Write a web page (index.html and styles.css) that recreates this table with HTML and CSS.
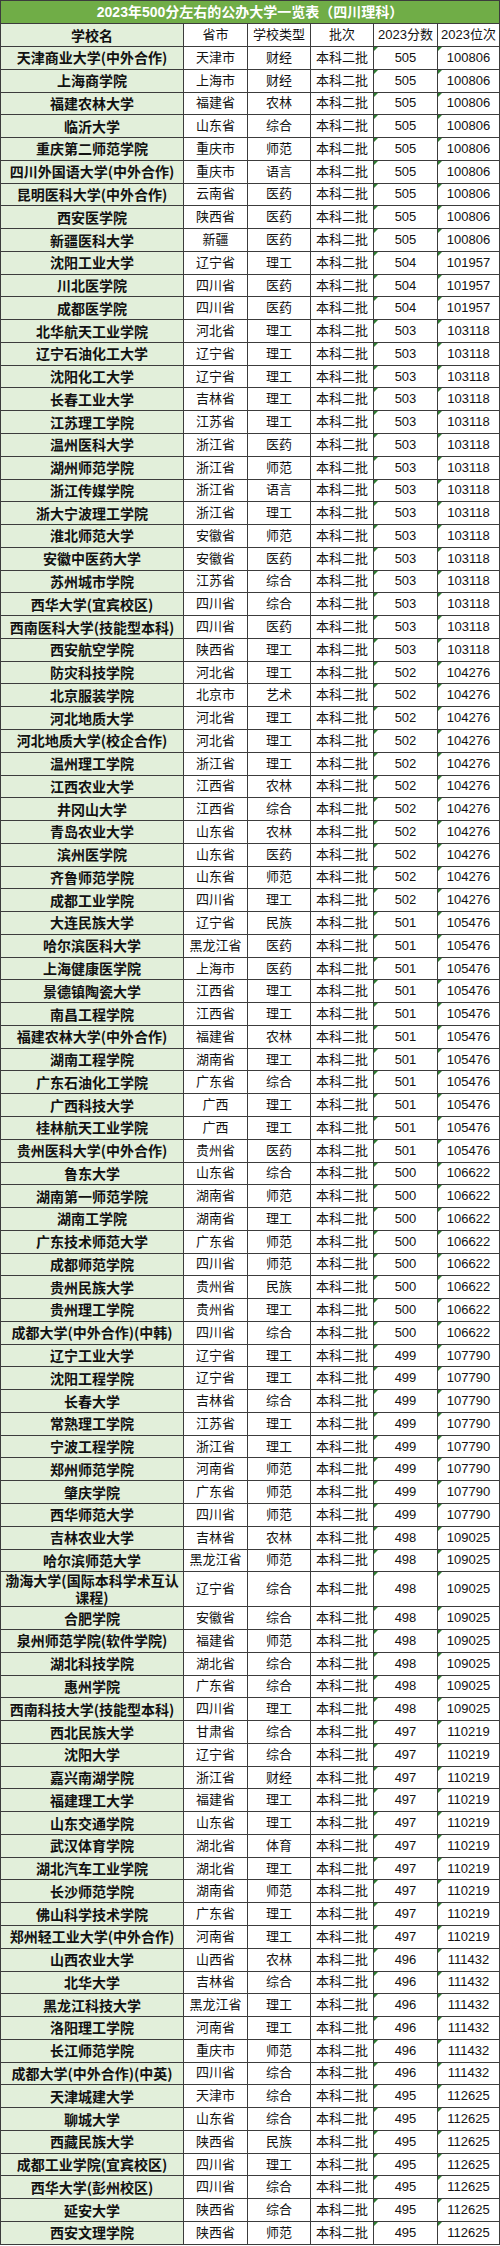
FILE: index.html
```html
<!DOCTYPE html>
<html lang="zh-CN">
<head>
<meta charset="utf-8">
<title>2023年500分左右的公办大学一览表（四川理科）</title>
<link rel="stylesheet" href="styles.css">
</head>
<body>
<table class="sheet">
<colgroup>
<col class="c-name"><col class="c-prov"><col class="c-type"><col class="c-batch"><col class="c-score"><col class="c-rank">
</colgroup>
<thead>
<tr class="title-row"><th colspan="6" class="title">2023年500分左右的公办大学一览表（四川理科）</th></tr>
<tr class="head-row"><th class="name">学校名</th><th>省市</th><th>学校类型</th><th>批次</th><th>2023分数</th><th>2023位次</th></tr>
</thead>
<tbody>
<tr><td class="name">天津商业大学(中外合作)</td><td>天津市</td><td>财经</td><td>本科二批</td><td class="num">505</td><td class="num">100806</td></tr>
<tr><td class="name">上海商学院</td><td>上海市</td><td>财经</td><td>本科二批</td><td class="num">505</td><td class="num">100806</td></tr>
<tr><td class="name">福建农林大学</td><td>福建省</td><td>农林</td><td>本科二批</td><td class="num">505</td><td class="num">100806</td></tr>
<tr><td class="name">临沂大学</td><td>山东省</td><td>综合</td><td>本科二批</td><td class="num">505</td><td class="num">100806</td></tr>
<tr><td class="name">重庆第二师范学院</td><td>重庆市</td><td>师范</td><td>本科二批</td><td class="num">505</td><td class="num">100806</td></tr>
<tr><td class="name">四川外国语大学(中外合作)</td><td>重庆市</td><td>语言</td><td>本科二批</td><td class="num">505</td><td class="num">100806</td></tr>
<tr><td class="name">昆明医科大学(中外合作)</td><td>云南省</td><td>医药</td><td>本科二批</td><td class="num">505</td><td class="num">100806</td></tr>
<tr><td class="name">西安医学院</td><td>陕西省</td><td>医药</td><td>本科二批</td><td class="num">505</td><td class="num">100806</td></tr>
<tr><td class="name">新疆医科大学</td><td>新疆</td><td>医药</td><td>本科二批</td><td class="num">505</td><td class="num">100806</td></tr>
<tr><td class="name">沈阳工业大学</td><td>辽宁省</td><td>理工</td><td>本科二批</td><td class="num">504</td><td class="num">101957</td></tr>
<tr><td class="name">川北医学院</td><td>四川省</td><td>医药</td><td>本科二批</td><td class="num">504</td><td class="num">101957</td></tr>
<tr><td class="name">成都医学院</td><td>四川省</td><td>医药</td><td>本科二批</td><td class="num">504</td><td class="num">101957</td></tr>
<tr><td class="name">北华航天工业学院</td><td>河北省</td><td>理工</td><td>本科二批</td><td class="num">503</td><td class="num">103118</td></tr>
<tr><td class="name">辽宁石油化工大学</td><td>辽宁省</td><td>理工</td><td>本科二批</td><td class="num">503</td><td class="num">103118</td></tr>
<tr><td class="name">沈阳化工大学</td><td>辽宁省</td><td>理工</td><td>本科二批</td><td class="num">503</td><td class="num">103118</td></tr>
<tr><td class="name">长春工业大学</td><td>吉林省</td><td>理工</td><td>本科二批</td><td class="num">503</td><td class="num">103118</td></tr>
<tr><td class="name">江苏理工学院</td><td>江苏省</td><td>理工</td><td>本科二批</td><td class="num">503</td><td class="num">103118</td></tr>
<tr><td class="name">温州医科大学</td><td>浙江省</td><td>医药</td><td>本科二批</td><td class="num">503</td><td class="num">103118</td></tr>
<tr><td class="name">湖州师范学院</td><td>浙江省</td><td>师范</td><td>本科二批</td><td class="num">503</td><td class="num">103118</td></tr>
<tr><td class="name">浙江传媒学院</td><td>浙江省</td><td>语言</td><td>本科二批</td><td class="num">503</td><td class="num">103118</td></tr>
<tr><td class="name">浙大宁波理工学院</td><td>浙江省</td><td>理工</td><td>本科二批</td><td class="num">503</td><td class="num">103118</td></tr>
<tr><td class="name">淮北师范大学</td><td>安徽省</td><td>师范</td><td>本科二批</td><td class="num">503</td><td class="num">103118</td></tr>
<tr><td class="name">安徽中医药大学</td><td>安徽省</td><td>医药</td><td>本科二批</td><td class="num">503</td><td class="num">103118</td></tr>
<tr><td class="name">苏州城市学院</td><td>江苏省</td><td>综合</td><td>本科二批</td><td class="num">503</td><td class="num">103118</td></tr>
<tr><td class="name">西华大学(宜宾校区)</td><td>四川省</td><td>综合</td><td>本科二批</td><td class="num">503</td><td class="num">103118</td></tr>
<tr><td class="name">西南医科大学(技能型本科)</td><td>四川省</td><td>医药</td><td>本科二批</td><td class="num">503</td><td class="num">103118</td></tr>
<tr><td class="name">西安航空学院</td><td>陕西省</td><td>理工</td><td>本科二批</td><td class="num">503</td><td class="num">103118</td></tr>
<tr><td class="name">防灾科技学院</td><td>河北省</td><td>理工</td><td>本科二批</td><td class="num">502</td><td class="num">104276</td></tr>
<tr><td class="name">北京服装学院</td><td>北京市</td><td>艺术</td><td>本科二批</td><td class="num">502</td><td class="num">104276</td></tr>
<tr><td class="name">河北地质大学</td><td>河北省</td><td>理工</td><td>本科二批</td><td class="num">502</td><td class="num">104276</td></tr>
<tr><td class="name">河北地质大学(校企合作)</td><td>河北省</td><td>理工</td><td>本科二批</td><td class="num">502</td><td class="num">104276</td></tr>
<tr><td class="name">温州理工学院</td><td>浙江省</td><td>理工</td><td>本科二批</td><td class="num">502</td><td class="num">104276</td></tr>
<tr><td class="name">江西农业大学</td><td>江西省</td><td>农林</td><td>本科二批</td><td class="num">502</td><td class="num">104276</td></tr>
<tr><td class="name">井冈山大学</td><td>江西省</td><td>综合</td><td>本科二批</td><td class="num">502</td><td class="num">104276</td></tr>
<tr><td class="name">青岛农业大学</td><td>山东省</td><td>农林</td><td>本科二批</td><td class="num">502</td><td class="num">104276</td></tr>
<tr><td class="name">滨州医学院</td><td>山东省</td><td>医药</td><td>本科二批</td><td class="num">502</td><td class="num">104276</td></tr>
<tr><td class="name">齐鲁师范学院</td><td>山东省</td><td>师范</td><td>本科二批</td><td class="num">502</td><td class="num">104276</td></tr>
<tr><td class="name">成都工业学院</td><td>四川省</td><td>理工</td><td>本科二批</td><td class="num">502</td><td class="num">104276</td></tr>
<tr><td class="name">大连民族大学</td><td>辽宁省</td><td>民族</td><td>本科二批</td><td class="num">501</td><td class="num">105476</td></tr>
<tr><td class="name">哈尔滨医科大学</td><td>黑龙江省</td><td>医药</td><td>本科二批</td><td class="num">501</td><td class="num">105476</td></tr>
<tr><td class="name">上海健康医学院</td><td>上海市</td><td>医药</td><td>本科二批</td><td class="num">501</td><td class="num">105476</td></tr>
<tr><td class="name">景德镇陶瓷大学</td><td>江西省</td><td>理工</td><td>本科二批</td><td class="num">501</td><td class="num">105476</td></tr>
<tr><td class="name">南昌工程学院</td><td>江西省</td><td>理工</td><td>本科二批</td><td class="num">501</td><td class="num">105476</td></tr>
<tr><td class="name">福建农林大学(中外合作)</td><td>福建省</td><td>农林</td><td>本科二批</td><td class="num">501</td><td class="num">105476</td></tr>
<tr><td class="name">湖南工程学院</td><td>湖南省</td><td>理工</td><td>本科二批</td><td class="num">501</td><td class="num">105476</td></tr>
<tr><td class="name">广东石油化工学院</td><td>广东省</td><td>综合</td><td>本科二批</td><td class="num">501</td><td class="num">105476</td></tr>
<tr><td class="name">广西科技大学</td><td>广西</td><td>理工</td><td>本科二批</td><td class="num">501</td><td class="num">105476</td></tr>
<tr><td class="name">桂林航天工业学院</td><td>广西</td><td>理工</td><td>本科二批</td><td class="num">501</td><td class="num">105476</td></tr>
<tr><td class="name">贵州医科大学(中外合作)</td><td>贵州省</td><td>医药</td><td>本科二批</td><td class="num">501</td><td class="num">105476</td></tr>
<tr><td class="name">鲁东大学</td><td>山东省</td><td>综合</td><td>本科二批</td><td class="num">500</td><td class="num">106622</td></tr>
<tr><td class="name">湖南第一师范学院</td><td>湖南省</td><td>师范</td><td>本科二批</td><td class="num">500</td><td class="num">106622</td></tr>
<tr><td class="name">湖南工学院</td><td>湖南省</td><td>理工</td><td>本科二批</td><td class="num">500</td><td class="num">106622</td></tr>
<tr><td class="name">广东技术师范大学</td><td>广东省</td><td>师范</td><td>本科二批</td><td class="num">500</td><td class="num">106622</td></tr>
<tr><td class="name">成都师范学院</td><td>四川省</td><td>师范</td><td>本科二批</td><td class="num">500</td><td class="num">106622</td></tr>
<tr><td class="name">贵州民族大学</td><td>贵州省</td><td>民族</td><td>本科二批</td><td class="num">500</td><td class="num">106622</td></tr>
<tr><td class="name">贵州理工学院</td><td>贵州省</td><td>理工</td><td>本科二批</td><td class="num">500</td><td class="num">106622</td></tr>
<tr><td class="name">成都大学(中外合作)(中韩)</td><td>四川省</td><td>综合</td><td>本科二批</td><td class="num">500</td><td class="num">106622</td></tr>
<tr><td class="name">辽宁工业大学</td><td>辽宁省</td><td>理工</td><td>本科二批</td><td class="num">499</td><td class="num">107790</td></tr>
<tr><td class="name">沈阳工程学院</td><td>辽宁省</td><td>理工</td><td>本科二批</td><td class="num">499</td><td class="num">107790</td></tr>
<tr><td class="name">长春大学</td><td>吉林省</td><td>综合</td><td>本科二批</td><td class="num">499</td><td class="num">107790</td></tr>
<tr><td class="name">常熟理工学院</td><td>江苏省</td><td>理工</td><td>本科二批</td><td class="num">499</td><td class="num">107790</td></tr>
<tr><td class="name">宁波工程学院</td><td>浙江省</td><td>理工</td><td>本科二批</td><td class="num">499</td><td class="num">107790</td></tr>
<tr><td class="name">郑州师范学院</td><td>河南省</td><td>师范</td><td>本科二批</td><td class="num">499</td><td class="num">107790</td></tr>
<tr><td class="name">肇庆学院</td><td>广东省</td><td>师范</td><td>本科二批</td><td class="num">499</td><td class="num">107790</td></tr>
<tr><td class="name">西华师范大学</td><td>四川省</td><td>师范</td><td>本科二批</td><td class="num">499</td><td class="num">107790</td></tr>
<tr><td class="name">吉林农业大学</td><td>吉林省</td><td>农林</td><td>本科二批</td><td class="num">498</td><td class="num">109025</td></tr>
<tr><td class="name">哈尔滨师范大学</td><td>黑龙江省</td><td>师范</td><td>本科二批</td><td class="num">498</td><td class="num">109025</td></tr>
<tr class="tall"><td class="name">渤海大学(国际本科学术互认课程)</td><td>辽宁省</td><td>综合</td><td>本科二批</td><td class="num">498</td><td class="num">109025</td></tr>
<tr><td class="name">合肥学院</td><td>安徽省</td><td>综合</td><td>本科二批</td><td class="num">498</td><td class="num">109025</td></tr>
<tr><td class="name">泉州师范学院(软件学院)</td><td>福建省</td><td>师范</td><td>本科二批</td><td class="num">498</td><td class="num">109025</td></tr>
<tr><td class="name">湖北科技学院</td><td>湖北省</td><td>综合</td><td>本科二批</td><td class="num">498</td><td class="num">109025</td></tr>
<tr><td class="name">惠州学院</td><td>广东省</td><td>综合</td><td>本科二批</td><td class="num">498</td><td class="num">109025</td></tr>
<tr><td class="name">西南科技大学(技能型本科)</td><td>四川省</td><td>理工</td><td>本科二批</td><td class="num">498</td><td class="num">109025</td></tr>
<tr><td class="name">西北民族大学</td><td>甘肃省</td><td>综合</td><td>本科二批</td><td class="num">497</td><td class="num">110219</td></tr>
<tr><td class="name">沈阳大学</td><td>辽宁省</td><td>综合</td><td>本科二批</td><td class="num">497</td><td class="num">110219</td></tr>
<tr><td class="name">嘉兴南湖学院</td><td>浙江省</td><td>财经</td><td>本科二批</td><td class="num">497</td><td class="num">110219</td></tr>
<tr><td class="name">福建理工大学</td><td>福建省</td><td>理工</td><td>本科二批</td><td class="num">497</td><td class="num">110219</td></tr>
<tr><td class="name">山东交通学院</td><td>山东省</td><td>理工</td><td>本科二批</td><td class="num">497</td><td class="num">110219</td></tr>
<tr><td class="name">武汉体育学院</td><td>湖北省</td><td>体育</td><td>本科二批</td><td class="num">497</td><td class="num">110219</td></tr>
<tr><td class="name">湖北汽车工业学院</td><td>湖北省</td><td>理工</td><td>本科二批</td><td class="num">497</td><td class="num">110219</td></tr>
<tr><td class="name">长沙师范学院</td><td>湖南省</td><td>师范</td><td>本科二批</td><td class="num">497</td><td class="num">110219</td></tr>
<tr><td class="name">佛山科学技术学院</td><td>广东省</td><td>理工</td><td>本科二批</td><td class="num">497</td><td class="num">110219</td></tr>
<tr><td class="name">郑州轻工业大学(中外合作)</td><td>河南省</td><td>理工</td><td>本科二批</td><td class="num">497</td><td class="num">110219</td></tr>
<tr><td class="name">山西农业大学</td><td>山西省</td><td>农林</td><td>本科二批</td><td class="num">496</td><td class="num">111432</td></tr>
<tr><td class="name">北华大学</td><td>吉林省</td><td>综合</td><td>本科二批</td><td class="num">496</td><td class="num">111432</td></tr>
<tr><td class="name">黑龙江科技大学</td><td>黑龙江省</td><td>理工</td><td>本科二批</td><td class="num">496</td><td class="num">111432</td></tr>
<tr><td class="name">洛阳理工学院</td><td>河南省</td><td>理工</td><td>本科二批</td><td class="num">496</td><td class="num">111432</td></tr>
<tr><td class="name">长江师范学院</td><td>重庆市</td><td>师范</td><td>本科二批</td><td class="num">496</td><td class="num">111432</td></tr>
<tr><td class="name">成都大学(中外合作)(中英)</td><td>四川省</td><td>综合</td><td>本科二批</td><td class="num">496</td><td class="num">111432</td></tr>
<tr><td class="name">天津城建大学</td><td>天津市</td><td>综合</td><td>本科二批</td><td class="num">495</td><td class="num">112625</td></tr>
<tr><td class="name">聊城大学</td><td>山东省</td><td>综合</td><td>本科二批</td><td class="num">495</td><td class="num">112625</td></tr>
<tr><td class="name">西藏民族大学</td><td>陕西省</td><td>民族</td><td>本科二批</td><td class="num">495</td><td class="num">112625</td></tr>
<tr><td class="name">成都工业学院(宜宾校区)</td><td>四川省</td><td>理工</td><td>本科二批</td><td class="num">495</td><td class="num">112625</td></tr>
<tr><td class="name">西华大学(彭州校区)</td><td>四川省</td><td>综合</td><td>本科二批</td><td class="num">495</td><td class="num">112625</td></tr>
<tr><td class="name">延安大学</td><td>陕西省</td><td>综合</td><td>本科二批</td><td class="num">495</td><td class="num">112625</td></tr>
<tr><td class="name">西安文理学院</td><td>陕西省</td><td>师范</td><td>本科二批</td><td class="num">495</td><td class="num">112625</td></tr>
</tbody>
</table>
</body>
</html>
```
FILE: styles.css
```css
html, body {
  margin: 0;
  padding: 0;
  background: #ffffff;
}

.sheet {
  width: 499px;
  border-collapse: collapse;
  table-layout: fixed;
  font-family: "Liberation Sans", "Noto Sans CJK SC", sans-serif;
  font-size: 13px;
  color: #111111;
}

.c-name { width: 183px; }
.c-prov { width: 64px; }
.c-type { width: 63px; }
.c-batch { width: 63px; }
.c-score { width: 64px; }
.c-rank { width: 62px; }

.sheet th,
.sheet td {
  border: 1px solid #3c3c3c;
  padding: 0 2px;
  text-align: center;
  vertical-align: middle;
  font-weight: 400;
  line-height: 16px;
  white-space: normal;
}

.title-row { height: 23px; }

.sheet th.title {
  background: #70ad47;
  color: #ffffff;
  font-weight: 700;
  font-size: 14px;
  font-family: "Liberation Sans", "Noto Sans CJK SC", sans-serif;
  letter-spacing: 0;
}

.head-row { height: 23px; }

.sheet tbody tr { height: 22.78px; }
.sheet tbody tr.tall { height: 34px; }

.sheet .name {
  background: #e2efda;
  font-family: "Noto Sans CJK SC", sans-serif;
  font-weight: 700;
  font-size: 14px;
  line-height: 17px;
  color: #111111;
}

.sheet td.num {
  position: relative;
}

.sheet td.num::before {
  content: "";
  position: absolute;
  left: 0;
  top: 0;
  width: 0;
  height: 0;
  border-top: 4px solid #2e7d32;
  border-right: 4px solid transparent;
}
```
